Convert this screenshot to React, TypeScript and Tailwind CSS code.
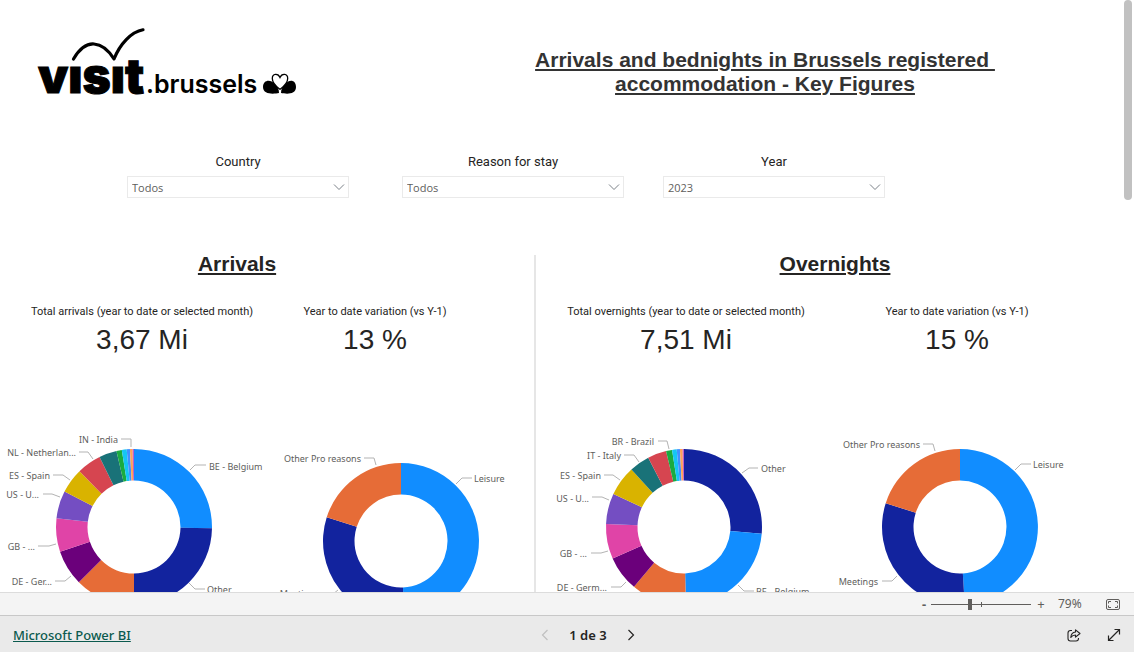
import { useState } from 'react';

interface Slice {
  color: string;
  to: number;
}

interface Callout {
  text: string;
  x: number;
  y: number;
  side: 'start' | 'end';
  line: string;
}

interface DonutProps {
  title: string;
  slices: Slice[];
  callouts: Callout[];
}

const OUTER = 78;
const INNER = 46.5;

const arrivalsByCountry: Slice[] = [
  { color: '#118DFF', to: 91 },
  { color: '#12239E', to: 180 },
  { color: '#E66C37', to: 225 },
  { color: '#6B007B', to: 251.5 },
  { color: '#E044A7', to: 276.4 },
  { color: '#744EC2', to: 297 },
  { color: '#D9B300', to: 315.7 },
  { color: '#D64550', to: 333.8 },
  { color: '#197278', to: 347 },
  { color: '#1AAB40', to: 351 },
  { color: '#15C6F4', to: 354.6 },
  { color: '#4092FF', to: 357 },
  { color: '#FFA058', to: 359 },
  { color: '#BE5DC9', to: 360 },
];

const overnightsByCountry: Slice[] = [
  { color: '#12239E', to: 94.9 },
  { color: '#118DFF', to: 178.6 },
  { color: '#E66C37', to: 219.9 },
  { color: '#6B007B', to: 246.2 },
  { color: '#E044A7', to: 272.2 },
  { color: '#744EC2', to: 295.1 },
  { color: '#D9B300', to: 317.6 },
  { color: '#197278', to: 332.7 },
  { color: '#D64550', to: 346.7 },
  { color: '#1AAB40', to: 351.2 },
  { color: '#15C6F4', to: 354.6 },
  { color: '#4092FF', to: 357 },
  { color: '#FFA058', to: 359 },
  { color: '#BE5DC9', to: 360 },
];

const arrivalsByReason: Slice[] = [
  { color: '#118DFF', to: 177.6 },
  { color: '#12239E', to: 287.8 },
  { color: '#E66C37', to: 360 },
];

const overnightsByReason: Slice[] = [
  { color: '#118DFF', to: 176.5 },
  { color: '#12239E', to: 287.8 },
  { color: '#E66C37', to: 360 },
];

const arrivalsCountryCallouts: Callout[] = [
  { text: 'BE - Belgium', x: 75, y: -57, side: 'start', line: '56,-57 61,-62 72,-62' },
  { text: 'Other', x: 73, y: 66, side: 'start', line: '55,56 61,62 71,62' },
  { text: 'IN - India', x: -16, y: -84, side: 'end', line: '-13,-88 -3,-88 -3,-80' },
  { text: 'NL - Netherlan...', x: -58, y: -71, side: 'end', line: '-55,-75 -46,-75 -41,-68' },
  { text: 'ES - Spain', x: -84, y: -48, side: 'end', line: '-81,-52 -71,-52 -64,-47' },
  { text: 'US - U...', x: -95, y: -29, side: 'end', line: '-91,-33 -82,-33 -74,-30' },
  { text: 'GB - ...', x: -99, y: 23, side: 'end', line: '-96,19 -85,19 -78,17' },
  { text: 'DE - Ger...', x: -82, y: 58, side: 'end', line: '-79,54 -69,54 -63,49' },
];

const overnightsCountryCallouts: Callout[] = [
  { text: 'Other', x: 77, y: -55, side: 'start', line: '58,-54 65,-59 74,-59' },
  { text: 'BE - Belgium', x: 72, y: 68, side: 'start', line: '54,58 60,64 70,64' },
  { text: 'BR - Brazil', x: -30, y: -82, side: 'end', line: '-26,-86 -17,-86 -15,-78' },
  { text: 'IT - Italy', x: -63, y: -68, side: 'end', line: '-60,-72 -50,-72 -45,-65' },
  { text: 'ES - Spain', x: -83, y: -48, side: 'end', line: '-80,-52 -71,-52 -64,-47' },
  { text: 'US - U...', x: -95, y: -25, side: 'end', line: '-92,-30 -82,-30 -75,-27' },
  { text: 'GB - ...', x: -97, y: 30, side: 'end', line: '-93,26 -83,26 -76,24' },
  { text: 'DE - Germ...', x: -77, y: 64, side: 'end', line: '-73,60 -63,60 -58,55' },
];

const arrivalsReasonCallouts: Callout[] = [
  { text: 'Leisure', x: 73, y: -59, side: 'start', line: '55,-57 61,-63 71,-63' },
  { text: 'Other Pro reasons', x: -40, y: -79, side: 'end', line: '-37,-83 -27,-83 -25,-76' },
  { text: 'Meetings', x: -82, y: 56, side: 'end', line: '-78,53 -68,53 -63,49' },
];

const overnightsReasonCallouts: Callout[] = [
  { text: 'Leisure', x: 73, y: -59, side: 'start', line: '55,-57 61,-63 71,-63' },
  { text: 'Other Pro reasons', x: -40, y: -79, side: 'end', line: '-37,-83 -27,-83 -25,-76' },
  { text: 'Meetings', x: -82, y: 58, side: 'end', line: '-78,54 -68,54 -63,49' },
];

// angle in degrees, clockwise from the top
function point(angle: number, radius: number) {
  const rad = (angle * Math.PI) / 180;
  return `${(Math.sin(rad) * radius).toFixed(2)} ${(-Math.cos(rad) * radius).toFixed(2)}`;
}

function arc(from: number, to: number) {
  const large = to - from > 180 ? 1 : 0;
  return `M${point(from, OUTER)} A${OUTER} ${OUTER} 0 ${large} 1 ${point(to, OUTER)} L${point(to, INNER)} A${INNER} ${INNER} 0 ${large} 0 ${point(from, INNER)} Z`;
}

function Donut({ title, slices, callouts }: DonutProps) {
  return (
    <svg
      viewBox="-130 -92 260 184"
      role="img"
      aria-label={title}
      className="h-[184px] w-[260px] shrink-0 overflow-visible"
    >
      {slices.map((slice, i) => (
        <path key={slice.color} d={arc(i ? slices[i - 1].to : 0, slice.to)} fill={slice.color} />
      ))}
      {callouts.map((c) => (
        <g key={c.text}>
          <polyline points={c.line} fill="none" stroke="#B3B3B3" strokeWidth="1" />
          <text x={c.x} y={c.y} textAnchor={c.side} className="fill-[#605e5c] font-['Noto_Sans'] text-[9px]">
            {c.text}
          </text>
        </g>
      ))}
    </svg>
  );
}

function Logo() {
  return (
    <svg viewBox="0 0 260 70" role="img" aria-label="visit.brussels" className="h-[70px] w-[260px] shrink-0 overflow-visible">
      <path
        d="M36.500 31 C43 20 50 15.500 57 16 C65 16.500 72 23 77 31 C83 16 94 4 106 1.800"
        fill="none"
        stroke="#000"
        strokeWidth="3.200"
        strokeLinecap="round"
        strokeLinejoin="round"
      />
      <text x="1" y="65" stroke="#000" strokeWidth="1" className="fill-black font-['Inter'] text-[48px] font-black">
        vısıt
      </text>
      <text x="109" y="65" className="fill-black font-['Inter'] text-[25px] font-semibold">.brussels</text>
      {/* iris */}
      <path
        d="M242.500 61 C238 57.500 235.300 54 235.300 50.500 C235.300 45.500 241 45 243 49.500 C245 45 250.700 45.500 250.700 50.500 C250.700 54 248 57.500 243.500 61 Z"
        fill="none"
        stroke="#000"
        strokeWidth="1.300"
      />
      <path d="M242 65 C237 66 226 67 226 59 C226 51.500 234 51 237.500 56 C240.500 59 242 61 242 65 Z" />
      <path d="M244 65 C249 66 259 67 259 59 C259 51.500 252 51 248.500 56 C245.500 59 244 61 244 65 Z" />
    </svg>
  );
}

function Slicer({ id, label, options, className }: { id: string; label: string; options: string[]; className: string }) {
  return (
    <div className={`w-[222px] ${className}`}>
      <label htmlFor={id} className="block text-center font-['Roboto'] text-[13px] leading-[18px] text-[#252423]">
        {label}
      </label>
      <div className="relative mt-[5px]">
        <select
          id={id}
          className="block h-[22px] w-full appearance-none border border-[#eaeaea] bg-white pt-0.5 pl-1 font-['Open_Sans'] text-[11px] text-[#605e5c]"
        >
          {options.map((o) => (
            <option key={o}>{o}</option>
          ))}
        </select>
        <svg viewBox="0 0 12 7" className="pointer-events-none absolute top-2 right-1 h-[7px] w-3">
          <path d="M1 .5 L6 5.500 L11 .5" fill="none" stroke="#7a8087" />
        </svg>
      </div>
    </div>
  );
}

function Kpi({ label, value }: { label: string; value: string }) {
  return (
    <div className="text-center text-[#252423]">
      <p className="font-['Roboto'] text-[11px] leading-4 whitespace-nowrap">{label}</p>
      <p className="mt-1 font-['Liberation_Sans'] text-[28px] leading-8">{value}</p>
    </div>
  );
}

const headingClass =
  "text-center font-['Liberation_Sans'] text-[21px] leading-[18px] font-bold text-[#252423] underline";

export default function App() {
  const [page, setPage] = useState(1);
  const [zoom, setZoom] = useState(79);

  return (
    <div className="flex h-screen flex-col overflow-hidden bg-white font-['Noto_Sans',sans-serif]">
      {/* Report */}
      <main className="relative min-h-0 flex-1 overflow-hidden">
        <header className="flex items-start pt-7 pl-[37px]">
          <Logo />
          <h1 className="mt-5 ml-[99px] flex-1 text-center font-['Liberation_Sans'] text-[21px] leading-6 font-bold text-[#333] underline">
            Arrivals and bednights in Brussels registered&nbsp;
            <br />
            accommodation - Key Figures
          </h1>
        </header>

        <div className="mt-[55px] flex pl-[127px]">
          <Slicer id="country" label="Country" options={['Todos']} className="" />
          <Slicer id="reason" label="Reason for stay" options={['Todos']} className="ml-[53px]" />
          <Slicer id="year" label="Year" options={['2023', '2022']} className="ml-[39px]" />
        </div>

        <div className="mt-[57px] grid grid-cols-[536fr_598fr]">
          <section className="border-r-2 border-[#e6e6e6]">
            <h2 className={`${headingClass} pr-[60px]`}>Arrivals</h2>
            <div className="mt-[31px] grid grid-cols-[284fr_182fr_68fr]">
              <Kpi label="Total arrivals (year to date or selected month)" value="3,67 Mi" />
              <Kpi label="Year to date variation (vs Y-1)" value="13 %" />
            </div>
            <div className="mt-[79px] grid grid-cols-2 justify-items-center">
              <Donut title="Arrivals by country" slices={arrivalsByCountry} callouts={arrivalsCountryCallouts} />
              <div className="pt-3.5">
                <Donut title="Arrivals by reason for stay" slices={arrivalsByReason} callouts={arrivalsReasonCallouts} />
              </div>
            </div>
          </section>

          <section>
            <h2 className={headingClass}>Overnights</h2>
            <div className="mt-[31px] grid grid-cols-[300fr_242fr_56fr]">
              <Kpi label="Total overnights (year to date or selected month)" value="7,51 Mi" />
              <Kpi label="Year to date variation (vs Y-1)" value="15 %" />
            </div>
            <div className="mt-[79px] grid grid-cols-[minmax(0,296fr)_minmax(0,256fr)_minmax(0,46fr)] justify-items-center">
              <Donut title="Overnights by country" slices={overnightsByCountry} callouts={overnightsCountryCallouts} />
              <Donut title="Overnights by reason for stay" slices={overnightsByReason} callouts={overnightsReasonCallouts} />
            </div>
          </section>
        </div>

        {/* Scrollbar thumb */}
        <div className="absolute top-0 right-0.5 h-[200px] w-2 rounded-full bg-[#c1c1c1]"></div>
      </main>

      {/* Zoom bar */}
      <div className="flex h-[23px] items-center justify-end border-t border-[#dcdcdc] bg-[#f4f4f4] pr-3.5 text-[#605e5c]">
        <button aria-label="Zoom out" onClick={() => setZoom(Math.max(10, zoom - 10))} className="w-3.5 text-center text-[13px] leading-4 font-bold">
          -
        </button>
        <div className="relative flex h-4 w-[100px] items-center">
          <input
            type="range"
            aria-label="Zoom"
            min={10}
            max={190}
            value={zoom}
            onChange={(e) => setZoom(Number(e.target.value))}
            className="h-px w-full appearance-none bg-[#605e5c] [&::-webkit-slider-thumb]:h-[11px] [&::-webkit-slider-thumb]:w-1 [&::-webkit-slider-thumb]:appearance-none [&::-webkit-slider-thumb]:bg-[#605e5c]"
          />
          <span className="pointer-events-none absolute top-1.5 left-1/2 h-[5px] w-px bg-[#605e5c]"></span>
        </div>
        <button aria-label="Zoom in" onClick={() => setZoom(Math.min(190, zoom + 10))} className="w-5 text-center text-[13px] leading-4">
          +
        </button>
        <span className="ml-[7px] w-6 text-xs leading-4">{zoom}%</span>
        <button aria-label="Fit to page" className="ml-6">
          <svg viewBox="0 0 14 11" className="block h-[11px] w-3.5" fill="none" stroke="#605e5c">
            <rect x=".5" y=".5" width="13" height="10" rx="1.500" />
            <path d="M2.500 4.500 V2.500 H5 M9 2.500 H11.500 V4.500 M11.500 6.500 V8.500 H9 M5 8.500 H2.500 V6.500" />
          </svg>
        </button>
      </div>

      {/* Status bar */}
      <footer className="grid h-[37px] grid-cols-[1fr_auto_1fr] items-center border-t border-[#c8c8c8] bg-[#eaeaea] px-[13px] pt-0.5">
        <a href="#powerbi" className="justify-self-start text-[13px] leading-5 font-medium text-[#0b5a4e] underline">
          Microsoft Power BI
        </a>
        <nav className="mr-[-42px] flex items-center">
          <button aria-label="Previous page" disabled={page === 1} onClick={() => setPage(page - 1)} className="text-[#c0c0c0] enabled:text-[#252423]">
            <svg viewBox="0 0 8 12" className="block h-3 w-2" fill="none" stroke="currentColor" strokeWidth="1.200">
              <path d="M6.500 1 L1.500 6 L6.500 11" />
            </svg>
          </button>
          <span className="mx-5 text-[13px] leading-5 font-semibold text-[#252423]">{page} de 3</span>
          <button aria-label="Next page" disabled={page === 3} onClick={() => setPage(page + 1)} className="text-[#c0c0c0] enabled:text-[#252423]">
            <svg viewBox="0 0 8 12" className="block h-3 w-2" fill="none" stroke="currentColor" strokeWidth="1.200">
              <path d="M1.500 1 L6.500 6 L1.500 11" />
            </svg>
          </button>
        </nav>
        <div className="flex items-center gap-[26px] justify-self-end">
          <button aria-label="Share">
            <svg viewBox="0 0 14 13" className="block h-[13px] w-3.5" fill="none" stroke="#252423" strokeWidth="1.100" strokeLinejoin="round">
              <path d="M5 1.500 H3.500 Q1 1.500 1 4 V9.500 Q1 12 3.500 12 H9 Q11.500 12 11.500 9.500 V9" />
              <path d="M8.500 .8 L13 4.500 L8.500 8.200 V6 C6.500 6 5 6.700 3.800 8.500 C4 5.500 5.500 3.300 8.500 3 Z" />
            </svg>
          </button>
          <button aria-label="Full screen">
            <svg viewBox="0 0 14 14" className="block h-3.5 w-3.5" fill="none" stroke="#252423" strokeWidth="1.200">
              <path d="M1.500 12.500 L12.500 1.500 M7.500 1.500 H12.500 V6.500 M1.500 7.500 V12.500 H6.500" />
            </svg>
          </button>
        </div>
      </footer>
    </div>
  );
}
